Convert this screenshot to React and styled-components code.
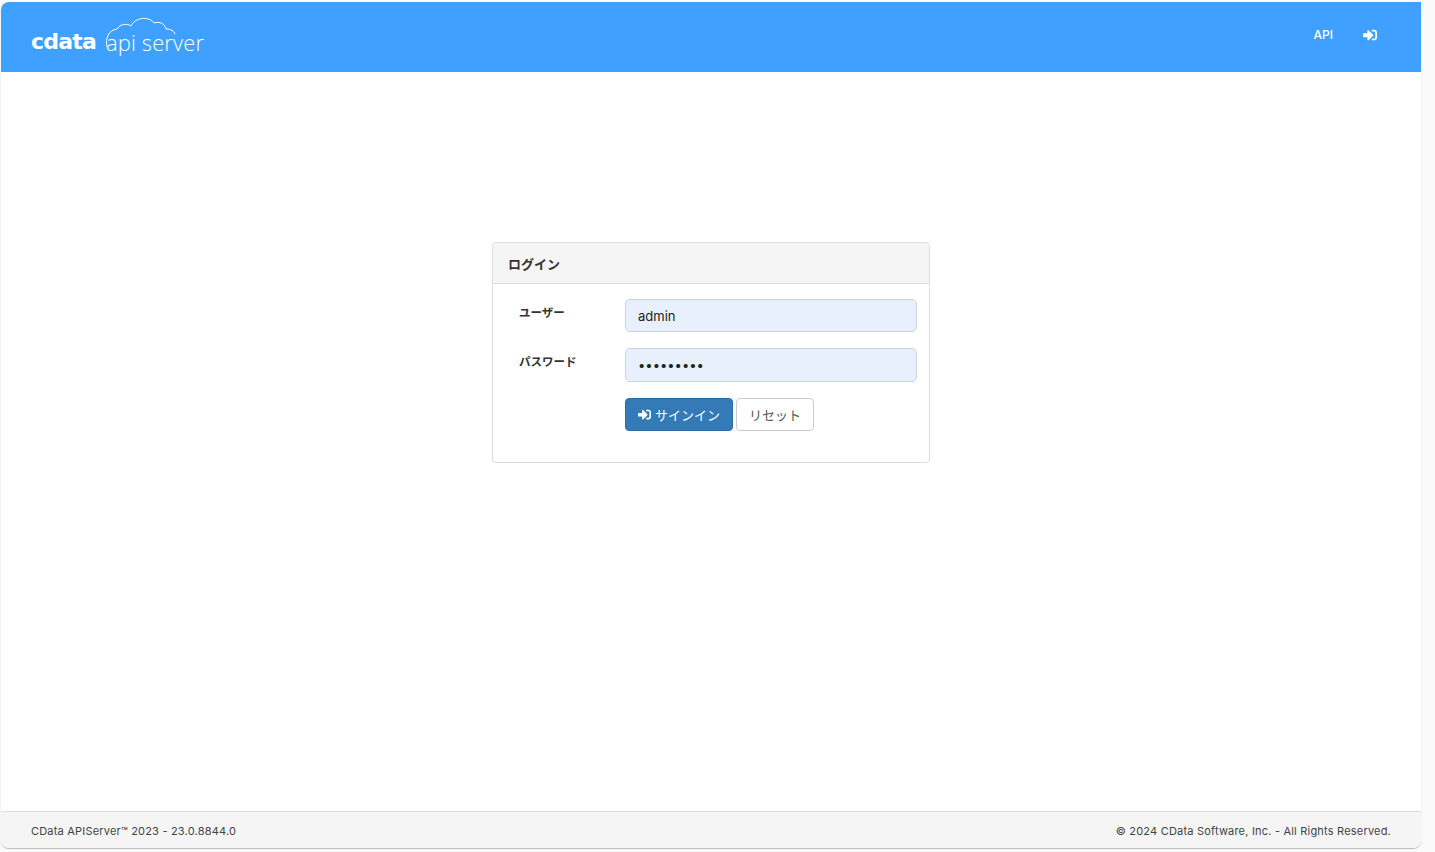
import React from 'react';
import styled, { createGlobalStyle } from 'styled-components';
import { FaSignInAlt } from 'react-icons/fa';

const sans = `Inter, "Noto Sans CJK JP", sans-serif`;

const GlobalStyle = createGlobalStyle`
  html, body {
    margin: 0;
    height: 100%;
    background: #fafafa;
    overflow: hidden;
  }
  * { box-sizing: border-box; }
`;

const Page = styled.div`
  width: 1435px;
  height: 852px;
  padding: 2px 14px 4px 1px;
  font-family: ${sans};
  color: #333;
`;

const Frame = styled.div`
  height: 100%;
  display: flex;
  flex-direction: column;
  background: #fff;
  border-radius: 8px 0 8px 8px;
  box-shadow: 0 1px 1px #bbb;
  overflow: hidden;
`;

const Header = styled.header`
  height: 70px;
  flex: none;
  display: flex;
  align-items: center;
  justify-content: space-between;
  padding: 0 44px 0 30px;
  background: #3fa0ff;
  color: #fff;
`;

const Logo = styled.div`
  display: flex;
  align-items: center;
  position: relative;
  height: 40px;
  padding-top: 9px;
`;

const LogoWord = styled.span`
  font-family: "DejaVu Sans", sans-serif;
  font-size: 22px;
  font-weight: 700;
  letter-spacing: -0.8px;
  line-height: 24px;
`;

const LogoProduct = styled.span`
  font-family: "Open Sans", sans-serif;
  font-size: 22px;
  font-weight: 300;
  line-height: 24px;
  margin-left: 10px;
  letter-spacing: 0.1px;
`;

const Cloud = styled.svg`
  position: absolute;
  left: 74px;
  top: -1px;
`;

const Nav = styled.nav`
  display: flex;
  align-items: center;
  gap: 30px;
  margin-top: -5px;
`;

const NavLink = styled.a`
  font-size: 12px;
  font-weight: 500;
  color: #fff;
  display: flex;
  align-items: center;
`;

const Main = styled.main`
  flex: 1;
  display: flex;
  justify-content: center;
  align-items: flex-start;
  padding-top: 170px;
`;

const Card = styled.section`
  width: 438px;
  height: 221px;
  border: 1px solid #ddd;
  border-radius: 4px;
`;

const CardHeading = styled.h3`
  margin: 0;
  height: 41px;
  padding: 0 15px;
  display: flex;
  align-items: center;
  font-size: 13px;
  font-weight: 700;
  background: #f5f5f5;
  border-bottom: 1px solid #ddd;
  border-radius: 3px 3px 0 0;
`;

const CardBody = styled.form`
  padding: 15px 12px 0 26px;
  display: flex;
  flex-direction: column;
  gap: 16px;
`;

const Row = styled.div`
  display: grid;
  grid-template-columns: 106px 292px;
  align-items: start;
`;

const Label = styled.label`
  font-size: 11.5px;
  font-weight: 700;
  line-height: 16px;
  padding-top: 6px;
`;

const Input = styled.input`
  width: 292px;
  height: ${(props) => props.$height}px;
  padding: 0 12px;
  font-family: ${sans};
  font-size: 13px;
  color: #222;
  background: #e8f0fe;
  border: 1px solid #ccd3dc;
  border-radius: 5px;
  outline: none;
`;

const Buttons = styled.div`
  grid-column: 2;
  display: flex;
  gap: 3px;
`;

const Button = styled.button`
  height: 33px;
  padding: 0 12px;
  display: flex;
  align-items: center;
  gap: 4px;
  font-family: ${sans};
  font-size: 13px;
  border-radius: 4px;
  border: 1px solid ${(props) => (props.$primary ? '#2e6da4' : '#ccc')};
  background: ${(props) => (props.$primary ? '#337ab7' : '#fff')};
  color: ${(props) => (props.$primary ? '#fff' : '#555')};
`;

const Footer = styled.footer`
  height: 37px;
  flex: none;
  display: flex;
  align-items: center;
  justify-content: space-between;
  padding: 2px 30px 0;
  font-size: 11px;
  letter-spacing: 0.2px;
  color: #444;
  background: #f5f5f5;
  border-top: 1px solid #ddd;
`;

const App = () => (
  <Page>
    <GlobalStyle />
    <Frame>
      <Header>
        <Logo>
          <LogoWord>cdata</LogoWord>
          <LogoProduct>api server</LogoProduct>
          <Cloud width="90" height="32" viewBox="0 0 90 32" fill="none" stroke="#fff" strokeWidth="1">
            <path d="M2 31 C0 22 4 14 12 13 C15 8 22 7 26 10 C30 1 44 0 49 7 C55 5 60 8 61 13 C66 13 69 15 70 18" />
          </Cloud>
        </Logo>
        <Nav>
          <NavLink>API</NavLink>
          <NavLink><FaSignInAlt size={14} /></NavLink>
        </Nav>
      </Header>
      <Main>
        <Card>
          <CardHeading>ログイン</CardHeading>
          <CardBody onSubmit={(e) => e.preventDefault()}>
            <Row>
              <Label>ユーザー</Label>
              <Input $height={33} defaultValue="admin" />
            </Row>
            <Row>
              <Label>パスワード</Label>
              <Input $height={34} type="password" defaultValue="123456789" />
            </Row>
            <Row>
              <Buttons>
                <Button $primary type="submit"><FaSignInAlt size={13} />サインイン</Button>
                <Button type="reset">リセット</Button>
              </Buttons>
            </Row>
          </CardBody>
        </Card>
      </Main>
      <Footer>
        <span>CData APIServer™ 2023 - 23.0.8844.0</span>
        <span>© 2024 CData Software, Inc. - All Rights Reserved.</span>
      </Footer>
    </Frame>
  </Page>
);

export default App;
